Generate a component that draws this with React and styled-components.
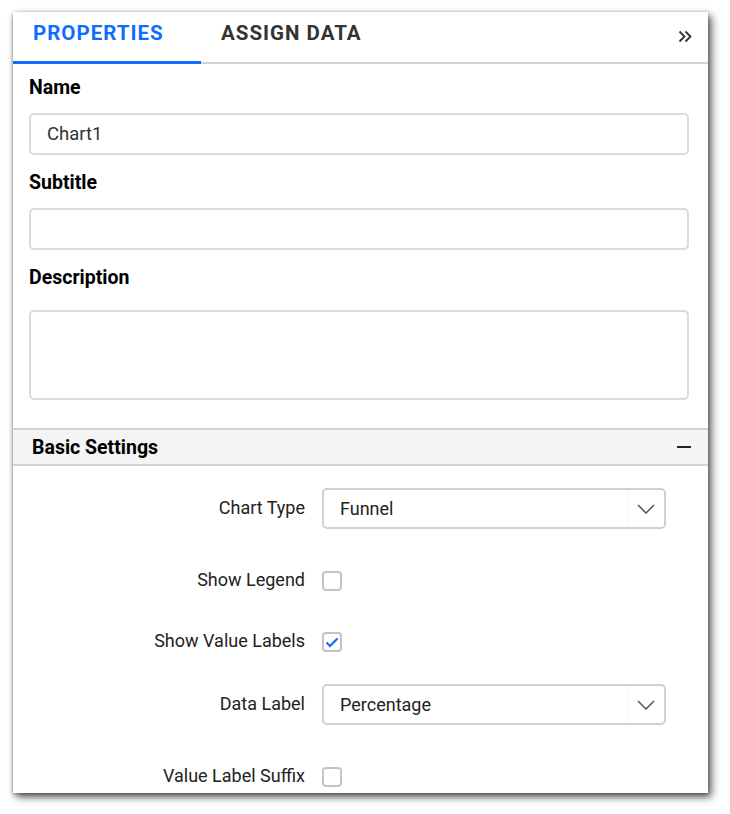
import React from 'react';
import styled, { createGlobalStyle } from 'styled-components';

const GlobalStyle = createGlobalStyle`
	body {
		margin: 0;
		background: #fff;
		font-family: Roboto, "Liberation Sans", sans-serif;
	}
`;

const Page = styled.div`
	padding: 12px 0 0 13px;
	height: 814px;
	box-sizing: border-box;
`;

const Panel = styled.div`
	width: 695px;
	height: 781px;
	overflow: hidden;
	background: #fff;
	box-shadow: 4px 4px 8px rgba(0, 0, 0, 0.55), 0 3px 5px rgba(0, 0, 0, 0.3), 0 0 3px rgba(0, 0, 0, 0.2);
`;

const TabBar = styled.div`
	display: flex;
	height: 50px;
	border-bottom: 2px solid #d3d3d3;
`;

const Tab = styled.div`
	min-width: 188px;
	box-sizing: border-box;
	padding: 9px 0 0 20px;
	font-size: 20.5px;
	line-height: 24px;
	font-weight: 700;
	letter-spacing: 1px;
	color: ${({ active }) => (active ? '#0d6efd' : '#333')};
	border-bottom: ${({ active }) => (active ? '3px solid #0d6efd' : 'none')};
	margin-bottom: ${({ active }) => (active ? '-2px' : '0')};
`;

const Collapse = styled.div`
	margin-left: auto;
	padding: 16px 15px 0 0;
	color: #333;
`;

const Form = styled.div`
	padding: 0 19px 0 16px;
`;

const FieldLabel = styled.div`
	margin-top: ${({ first }) => (first ? '12px' : '16px')};
	font-size: 19.5px;
	line-height: 24px;
	font-weight: 700;
	color: #000;
`;

const TextInput = styled.div`
	box-sizing: border-box;
	height: ${({ tall }) => (tall ? '90px' : '42px')};
	margin-top: ${({ tall }) => (tall ? '20px' : '13px')};
	border: 2px solid #dadada;
	border-radius: 5px;
	padding: 0 16px;
	display: flex;
	align-items: center;
	font-size: 18.5px;
	color: #333;
`;

const SectionHeader = styled.div`
	margin-top: 28px;
	height: 34px;
	display: flex;
	align-items: center;
	justify-content: space-between;
	padding: 0 17px 0 19px;
	background: #f4f4f4;
	border-top: 2px solid #d3d3d3;
	border-bottom: 2px solid #d3d3d3;
	font-size: 19.5px;
	font-weight: 700;
	color: #000;
`;

const Minus = styled.span`
	width: 14px;
	height: 2px;
	background: #222;
`;

const Settings = styled.div`
	padding-top: 22px;
`;

const Row = styled.div`
	display: grid;
	grid-template-columns: 292px 344px;
	column-gap: 17px;
	align-items: center;
	margin-bottom: ${({ gap }) => gap}px;
`;

const RowLabel = styled.div`
	text-align: right;
	font-size: 18px;
	line-height: 20px;
	margin-top: -2px;
	color: #222;
`;

const Select = styled.div`
	box-sizing: border-box;
	height: 41px;
	border: 2px solid #d0d0d0;
	border-radius: 5px;
	display: flex;
	align-items: center;
	font-size: 18px;
	color: #222;
`;

const SelectValue = styled.span`
	flex: 1;
	padding-left: 16px;
`;

const SelectArrow = styled.span`
	width: 36px;
	height: 100%;
	display: flex;
	align-items: center;
	justify-content: center;
	border-left: 1px solid #f6f6f6;
`;

const Checkbox = styled.span`
	box-sizing: border-box;
	width: 20px;
	height: 20px;
	border: 2px solid #c4c4c4;
	border-radius: 4px;
	display: flex;
	align-items: center;
	justify-content: center;
`;

const DoubleChevron = () => (
	<svg width="15" height="13" viewBox="0 0 15 13" fill="none" stroke="#333" strokeWidth="1.8">
		<path d="M1.5 1.5 L6.5 6.5 L1.5 11.5" />
		<path d="M7.5 1.5 L12.5 6.5 L7.5 11.5" />
	</svg>
);

const ChevronDown = () => (
	<svg width="18" height="10" viewBox="0 0 18 10" fill="none" stroke="#555" strokeWidth="1.5">
		<path d="M1 1 L9 9 L17 1" />
	</svg>
);

const Check = () => (
	<svg width="14" height="11" viewBox="0 0 14 11" fill="none" stroke="#0d6efd" strokeWidth="2.2">
		<path d="M1.5 5.5 L5 9 L12.5 1.5" />
	</svg>
);

const settings = [
	{ label: 'Chart Type', type: 'select', value: 'Funnel', gap: 42 },
	{ label: 'Show Legend', type: 'check', checked: false, gap: 41 },
	{ label: 'Show Value Labels', type: 'check', checked: true, gap: 32 },
	{ label: 'Data Label', type: 'select', value: 'Percentage', gap: 42 },
	{ label: 'Value Label Suffix', type: 'check', checked: false, gap: 0 },
];

const App = () => (
	<>
		<GlobalStyle />
		<Page>
			<Panel>
				<TabBar>
					<Tab active>PROPERTIES</Tab>
					<Tab>ASSIGN DATA</Tab>
					<Collapse>
						<DoubleChevron />
					</Collapse>
				</TabBar>
				<Form>
					<FieldLabel first>Name</FieldLabel>
					<TextInput>Chart1</TextInput>
					<FieldLabel>Subtitle</FieldLabel>
					<TextInput />
					<FieldLabel>Description</FieldLabel>
					<TextInput tall />
				</Form>
				<SectionHeader>
					Basic Settings
					<Minus />
				</SectionHeader>
				<Settings>
					{settings.map((item) => (
						<Row key={item.label} gap={item.gap}>
							<RowLabel>{item.label}</RowLabel>
							{item.type === 'select' ? (
								<Select>
									<SelectValue>{item.value}</SelectValue>
									<SelectArrow>
										<ChevronDown />
									</SelectArrow>
								</Select>
							) : (
								<Checkbox>{item.checked && <Check />}</Checkbox>
							)}
						</Row>
					))}
				</Settings>
			</Panel>
		</Page>
	</>
);

export default App;
